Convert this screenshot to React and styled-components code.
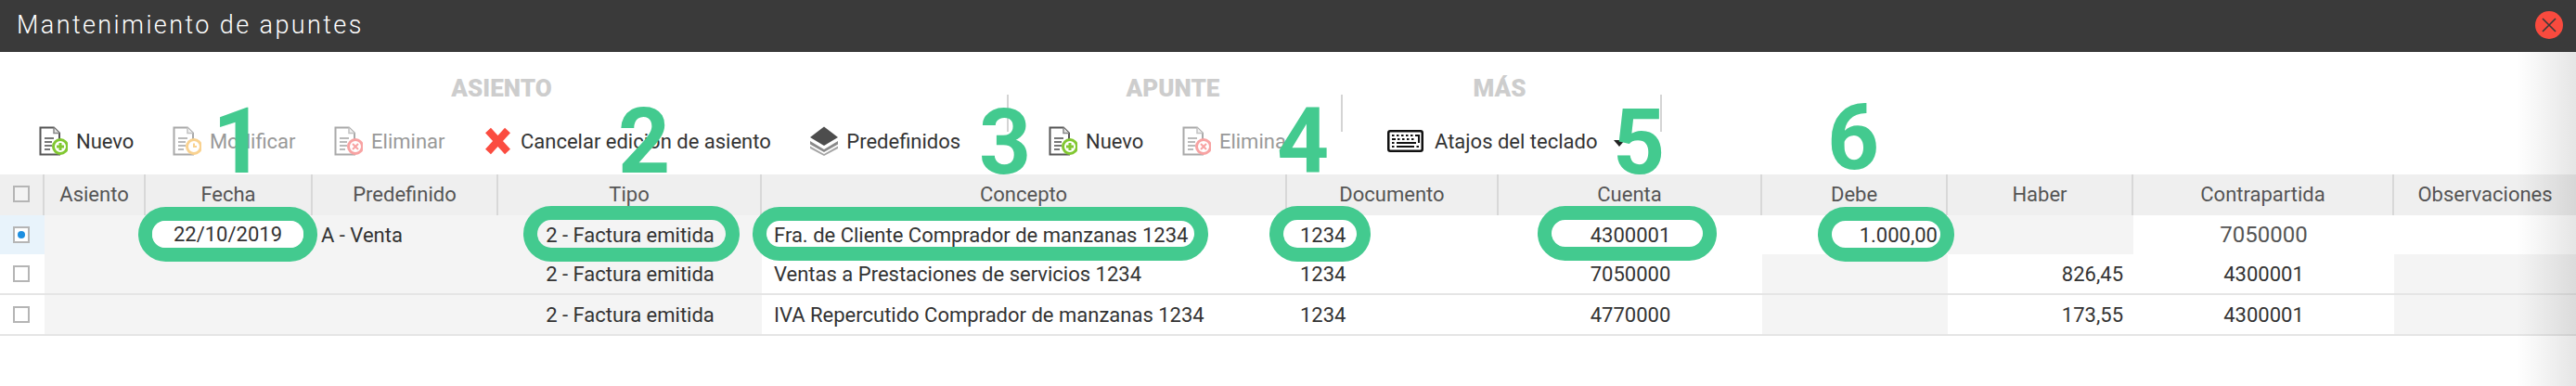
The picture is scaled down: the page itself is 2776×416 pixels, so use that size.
import React from "react";
import styled, { createGlobalStyle } from "styled-components";

const GREEN = "#43ca8f";
const COLUMNS = "48px 109px 180px 200px 284px 566px 228px 284px 200px 200px 281px 196px";

const GlobalStyle = createGlobalStyle`
  html, body {
    margin: 0;
    padding: 0;
    background: #fff;
    overflow: hidden;
  }
  body {
    font-family: Roboto, "Liberation Sans", sans-serif;
    color: #333;
  }
`;

const Page = styled.div`
  position: relative;
  width: 2776px;
  height: 416px;
  overflow: hidden;
  background: #fff;
`;

const TitleBar = styled.header`
  display: flex;
  align-items: center;
  justify-content: space-between;
  height: 56px;
  padding: 0 14px 2px 18px;
  box-sizing: border-box;
  background: #3a3a3a;
`;

const Title = styled.h1`
  margin: 0;
  font-size: 27px;
  font-weight: 300;
  letter-spacing: 2.4px;
  color: #fff;
`;

const CloseButton = styled.button`
  display: flex;
  align-items: center;
  justify-content: center;
  width: 30px;
  height: 30px;
  padding: 0;
  border: 0;
  border-radius: 50%;
  background: #f94a3e;
  color: #3a3a3a;
`;

const Toolbar = styled.div`
  display: flex;
  height: 132px;
`;

const Group = styled.section`
  width: ${(p) => p.$width}px;
  flex: none;
  box-sizing: border-box;
`;

const GroupTitle = styled.h2`
  margin: 0;
  padding: 24px 4px 0 0;
  height: 80px;
  box-sizing: border-box;
  text-align: center;
  font-size: 26px;
  line-height: 30px;
  font-weight: 900;
  color: #cdcdcd;
`;

const Separator = styled.div`
  flex: none;
  width: 2px;
  height: 40px;
  margin-top: 46px;
  background: #d4d4d4;
`;

const Actions = styled.div`
  display: flex;
  align-items: center;
  gap: 41.5px;
  height: 32px;
  padding-left: ${(p) => p.$inset}px;
`;

const Action = styled.div`
  display: flex;
  align-items: center;
  gap: ${(p) => p.$gap || 9}px;
  font-size: 22px;
  white-space: nowrap;
  color: ${(p) => (p.$disabled ? "#999" : "#333")};
  svg {
    flex: none;
    opacity: ${(p) => (p.$disabled ? 0.5 : 1)};
    filter: blur(0.5px);
  }
`;

const Caret = styled.span`
  width: 0;
  height: 0;
  margin-left: 6px;
  margin-top: 4px;
  border-left: 6px solid transparent;
  border-right: 6px solid transparent;
  border-top: 7px solid #222;
`;

const HeaderRow = styled.div`
  display: grid;
  grid-template-columns: ${COLUMNS};
  height: 44px;
  background: #efefef;
`;

const HeaderCell = styled.div`
  display: flex;
  align-items: center;
  justify-content: center;
  padding-bottom: 2px;
  box-sizing: border-box;
  border-right: ${(p) => (p.$last ? "0" : "2px solid #d8d8d8")};
  font-size: 22px;
  color: #555;
`;

const Row = styled.div`
  display: grid;
  grid-template-columns: ${COLUMNS};
  height: ${(p) => (p.$ruled ? 44 : 42)}px;
  box-sizing: border-box;
  border-bottom: ${(p) => (p.$ruled ? "2px solid #e5e5e5" : "0")};
`;

const Cell = styled.div`
  display: flex;
  align-items: center;
  box-sizing: border-box;
  padding: 0 ${(p) => (p.$align === "right" ? 11 : 0)}px 0 ${(p) => p.$inset || 0}px;
  justify-content: ${(p) =>
    p.$align === "right" ? "flex-end" : p.$align === "center" ? "center" : "flex-start"};
  background: ${(p) => (p.$shaded ? "#f4f4f4" : "#fff")};
  font-size: ${(p) => (p.$soft ? 24 : 22)}px;
  white-space: nowrap;
  color: ${(p) => (p.$soft ? "#555" : "#333")};
`;

const CheckCell = styled.div`
  display: flex;
  align-items: center;
  justify-content: center;
  background: ${(p) => (p.$selected ? "#e8f3fb" : "#fff")};
  padding-right: 2px;
`;

const CheckBox = styled.span`
  display: flex;
  align-items: center;
  justify-content: center;
  width: 18px;
  height: 18px;
  box-sizing: border-box;
  border: 2px solid #b5b5b5;
  background: #fff;
  &::after {
    content: "";
    display: ${(p) => (p.$checked ? "block" : "none")};
    width: 8px;
    height: 8px;
    border-radius: 50%;
    background: #1e8fe0;
  }
`;

const HeaderCheck = styled(CheckBox)`
  background: #f3f3f3;
`;

const Oval = styled.div`
  position: absolute;
  left: ${(p) => p.$x}px;
  top: ${(p) => p.$y}px;
  width: ${(p) => p.$w}px;
  height: ${(p) => p.$h}px;
  box-sizing: border-box;
  border: 15px solid ${GREEN};
  border-radius: 30px;
`;

const OvalText = styled.span`
  display: flex;
  align-items: center;
  justify-content: center;
  height: 100%;
  border-radius: 14px;
  background: #fff;
  font-size: 22px;
  color: #333;
`;

const Marker = styled.div`
  position: absolute;
  left: ${(p) => p.$x}px;
  top: ${(p) => p.$y}px;
  font-size: 98px;
  line-height: 70px;
  font-weight: 700;
  color: ${GREEN};
`;

const EdgeFade = styled.div`
  position: absolute;
  top: 56px;
  right: 0;
  bottom: 0;
  width: 64px;
  background: linear-gradient(to right, rgba(0, 0, 0, 0), rgba(0, 0, 0, 0.1));
`;

const DocIcon = ({ badge, mark }) => (
  <svg width="31" height="32" viewBox="0 0 31 32">
    <path d="M1.5 1.5H16L22 7.5V30.5H1.5Z" fill="#fff" stroke="#555" strokeWidth="2" />
    <path d="M16 1.5V7.5H22" fill="#e4e4e4" stroke="#888" strokeWidth="1.5" />
    <path d="M6 13H16M6 17H14M6 21H14M6 25H12" stroke="#777" strokeWidth="2" />
    <circle cx="23" cy="22" r="7.5" fill="#fff" stroke={badge} strokeWidth="3" />
    {mark === "plus" && <path d="M23 18V26M19 22H27" stroke={badge} strokeWidth="3" />}
    {mark === "dot" && <path d="M23 18.5V22H26" stroke={badge} strokeWidth="2" fill="none" />}
    {mark === "cross" && <path d="M20 19L26 25M26 19L20 25" stroke={badge} strokeWidth="2" />}
  </svg>
);

const CrossIcon = () => (
  <svg width="31" height="32" viewBox="0 0 31 32">
    <path d="M5 4.5L15.5 16L26 4.5M5 27.5L15.5 16L26 27.5" stroke="#fb4c40" strokeWidth="8" fill="none" />
  </svg>
);

const LayersIcon = () => (
  <svg width="32" height="32" viewBox="0 0 32 32">
    <path d="M16 0.5L31 12L16 21L1 12Z" fill="#4d4d4d" />
    <path d="M1 16L16 25L31 16V19.5L16 28L1 19.5Z" fill="#8a8a8a" />
    <path d="M1 21.5L16 30L31 21.5V24L16 32L1 24Z" fill="#a5a5a5" />
  </svg>
);

const KeyboardIcon = () => (
  <svg width="39" height="24" viewBox="0 0 39 24">
    <rect x="1.25" y="1.25" width="36.5" height="21.5" rx="2" fill="#fff" stroke="#111" strokeWidth="2.5" />
    <path
      d="M5 6H7.500M10 6H12.500M15 6H17.500M20 6H22.500M25 6H27.500M30 6H34V14M5 10H9M11 10H13.500M16 10H18.500M21 10H23.500M26 10H28.500M5 14H7.500M10 14H31M5 18H7.500M10 18H29M31.500 18H34"
      stroke="#111"
      strokeWidth="2"
      fill="none"
    />
  </svg>
);

const CloseIcon = () => (
  <svg width="16" height="16" viewBox="0 0 16 16">
    <path d="M1 1L15 15M15 1L1 15" stroke="currentColor" strokeWidth="1.6" />
  </svg>
);

const headers = [
  "Asiento",
  "Fecha",
  "Predefinido",
  "Tipo",
  "Concepto",
  "Documento",
  "Cuenta",
  "Debe",
  "Haber",
  "Contrapartida",
  "Observaciones",
];

const rows = [
  {
    selected: true,
    concepto: "Fra. de Cliente Comprador de manzanas 1234",
    predefinido: "A - Venta",
    cuenta: "4300001",
    debe: "1.000,00",
    haber: "",
    contra: "7050000",
  },
  {
    ruled: true,
    concepto: "Ventas a Prestaciones de servicios 1234",
    cuenta: "7050000",
    haber: "826,45",
    contra: "4300001",
  },
  {
    ruled: true,
    concepto: "IVA Repercutido Comprador de manzanas 1234",
    cuenta: "4770000",
    haber: "173,55",
    contra: "4300001",
  },
];

const ovals = [
  { x: 149, y: 223, w: 193, h: 59, text: "22/10/2019" },
  { x: 564, y: 222, w: 233, h: 60 },
  { x: 811, y: 223, w: 491, h: 58 },
  { x: 1368, y: 222, w: 109, h: 60 },
  { x: 1657, y: 222, w: 193, h: 59 },
  { x: 1959, y: 223, w: 147, h: 59 },
];

const markers = [
  { x: 229, y: 118, n: 1 },
  { x: 666, y: 118, n: 2 },
  { x: 1055, y: 119, n: 3 },
  { x: 1376, y: 117, n: 4 },
  { x: 1738, y: 119, n: 5 },
  { x: 1969, y: 114, n: 6 },
];

const App = () => {
  return (
    <Page>
      <GlobalStyle />
      <TitleBar>
        <Title>Mantenimiento de apuntes</Title>
        <CloseButton aria-label="Cerrar">
          <CloseIcon />
        </CloseButton>
      </TitleBar>

      <Toolbar>
        <Group $width={1085}>
          <GroupTitle>ASIENTO</GroupTitle>
          <Actions $inset={42}>
            <Action>
              <DocIcon badge="#82c832" mark="plus" />
              Nuevo
            </Action>
            <Action $disabled>
              <DocIcon badge="#f5a623" mark="dot" />
              Modificar
            </Action>
            <Action $disabled>
              <DocIcon badge="#f24a4a" mark="cross" />
              Eliminar
            </Action>
            <Action>
              <CrossIcon />
              Cancelar edición de asiento
            </Action>
            <Action $gap={8}>
              <LayersIcon />
              Predefinidos
            </Action>
          </Actions>
        </Group>
        <Separator />
        <Group $width={358}>
          <GroupTitle>APUNTE</GroupTitle>
          <Actions $inset={43}>
            <Action>
              <DocIcon badge="#82c832" mark="plus" />
              Nuevo
            </Action>
            <Action $disabled>
              <DocIcon badge="#f24a4a" mark="cross" />
              Eliminar
            </Action>
          </Actions>
        </Group>
        <Separator />
        <Group $width={342}>
          <GroupTitle>MÁS</GroupTitle>
          <Actions $inset={48}>
            <Action $gap={12}>
              <KeyboardIcon />
              Atajos del teclado
              <Caret />
            </Action>
          </Actions>
        </Group>
        <Separator />
      </Toolbar>

      <HeaderRow>
        <HeaderCell>
          <HeaderCheck />
        </HeaderCell>
        {headers.map((h, i) => (
          <HeaderCell key={h} $last={i === headers.length - 1}>
            {h}
          </HeaderCell>
        ))}
      </HeaderRow>

      {rows.map((r) => (
        <Row key={r.concepto} $ruled={r.ruled}>
          <CheckCell $selected={r.selected}>
            <CheckBox $checked={r.selected} />
          </CheckCell>
          <Cell $shaded />
          <Cell $shaded />
          <Cell $shaded $inset={9}>
            {r.predefinido}
          </Cell>
          <Cell $shaded $align="center">
            2 - Factura emitida
          </Cell>
          <Cell $inset={13}>{r.concepto}</Cell>
          <Cell $inset={14}>1234</Cell>
          <Cell $align="center">{r.cuenta}</Cell>
          <Cell $align="right" $shaded={!r.selected}>
            {r.debe}
          </Cell>
          <Cell $align="right" $shaded={r.selected}>
            {r.haber}
          </Cell>
          <Cell $align="center" $soft={r.selected}>
            {r.contra}
          </Cell>
          <Cell $shaded={!r.selected} />
        </Row>
      ))}

      {ovals.map((o) => (
        <Oval key={o.x} $x={o.x} $y={o.y} $w={o.w} $h={o.h}>
          {o.text && <OvalText>{o.text}</OvalText>}
        </Oval>
      ))}
      {markers.map((m) => (
        <Marker key={m.n} $x={m.x} $y={m.y}>
          {m.n}
        </Marker>
      ))}
      <EdgeFade />
    </Page>
  );
};

export default App;
